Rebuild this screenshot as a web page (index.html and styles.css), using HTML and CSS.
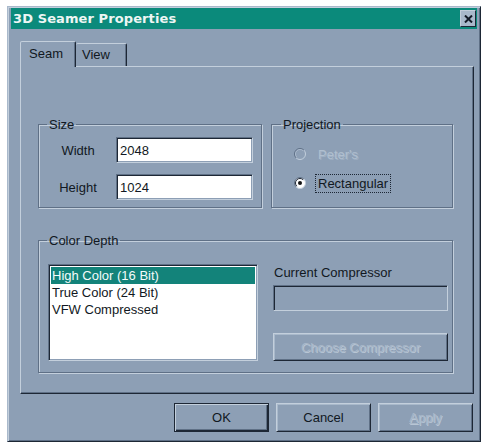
FILE: index.html
```html
<!DOCTYPE html>
<html lang="en">
<head>
<meta charset="utf-8">
<title>3D Seamer Properties</title>
<link rel="stylesheet" href="styles.css">
</head>
<body>
<div class="window">
  <div class="titlebar">
    <span class="title">3D Seamer Properties</span>
    <button class="close" type="button" aria-label="Close">
      <svg width="9" height="8" viewBox="0 0 9 8"><path d="M1 0.5 L8 7.5 M8 0.5 L1 7.5" stroke="#141c28" stroke-width="2"/></svg>
    </button>
  </div>
  <div class="content">
    <div class="tabs">
      <div class="tab active">Seam</div>
      <div class="tab">View</div>
    </div>
    <div class="panel">
      <div class="top-row">
        <fieldset class="group size">
          <legend>Size</legend>
          <div class="size-grid">
            <label class="field-label">Width</label>
            <div class="input sunken">2048</div>
            <label class="field-label">Height</label>
            <div class="input sunken">1024</div>
          </div>
        </fieldset>
        <fieldset class="group projection">
          <legend>Projection</legend>
          <div class="radio disabled">
            <svg width="12" height="12" viewBox="0 0 12 12">
              <circle cx="6" cy="6" r="5.5" fill="#8d9fb5"/>
              <path d="M2.1 9.9 A5.5 5.5 0 0 1 9.9 2.1" fill="none" stroke="#5f7086" stroke-width="1"/>
              <path d="M9.9 2.1 A5.5 5.5 0 0 1 2.1 9.9" fill="none" stroke="#c3cfdc" stroke-width="1"/>
              <path d="M2.8 9.2 A4.5 4.5 0 0 1 9.2 2.8" fill="none" stroke="#aab9cb" stroke-width="1"/>
            </svg>
            <span class="radio-text">Peter's</span>
          </div>
          <div class="radio">
            <svg width="12" height="12" viewBox="0 0 12 12">
              <circle cx="6" cy="6" r="5.5" fill="#ffffff"/>
              <path d="M2.1 9.9 A5.5 5.5 0 0 1 9.9 2.1" fill="none" stroke="#5f7086" stroke-width="1"/>
              <path d="M9.9 2.1 A5.5 5.5 0 0 1 2.1 9.9" fill="none" stroke="#c3cfdc" stroke-width="1"/>
              <path d="M2.8 9.2 A4.5 4.5 0 0 1 9.2 2.8" fill="none" stroke="#1d2735" stroke-width="1"/>
              <circle cx="6" cy="6" r="2" fill="#111"/>
            </svg>
            <span class="radio-text focus">Rectangular</span>
          </div>
        </fieldset>
      </div>
      <fieldset class="group depth">
        <legend>Color Depth</legend>
        <div class="depth-row">
          <ul class="listbox sunken">
            <li class="selected">High Color (16 Bit)</li>
            <li>True Color (24 Bit)</li>
            <li>VFW Compressed</li>
          </ul>
          <div class="compressor">
            <div class="comp-label">Current Compressor</div>
            <div class="comp-field sunken"></div>
            <button class="btn wide disabled" type="button">Choose Compressor</button>
          </div>
        </div>
      </fieldset>
    </div>
    <div class="buttons">
      <button class="btn default" type="button">OK</button>
      <button class="btn" type="button">Cancel</button>
      <button class="btn disabled" type="button"><u>A</u>pply</button>
    </div>
  </div>
</div>
</body>
</html>
```
FILE: styles.css
```css
:root {
  --face: #8d9fb5;
  --light: #c3cfdc;
  --hi2: #a9b9cb;
  --shadow: #5f7086;
  --dark: #1d2735;
  --teal: #0b8a7b;
}

* { box-sizing: border-box; }

body {
  margin: 0;
  background: #ffffff;
  font-family: "Liberation Sans", Arial, sans-serif;
  font-size: 13px;
  color: #111822;
}

.window {
  margin: 6px 0 0 7px;
  width: 474px;
  height: 436px;
  background: var(--face);
  border: 1px solid;
  border-color: var(--hi2) var(--dark) var(--dark) var(--hi2);
  box-shadow: inset 1px 1px 0 var(--light), inset -1px -1px 0 var(--shadow);
  padding: 1px 3px 0 3px;
  display: flex;
  flex-direction: column;
}

.titlebar {
  height: 21px;
  background: var(--teal);
  display: flex;
  align-items: center;
  justify-content: space-between;
  padding: 0 1px 0 2px;
}

.title {
  font-family: "DejaVu Sans", Verdana, sans-serif;
  font-weight: bold;
  font-size: 13px;
  color: #eef6f4;
  letter-spacing: 0.1px;
}

.close {
  width: 16px;
  height: 17px;
  padding: 0;
  background: #a9b9cb;
  border: 1px solid;
  border-color: var(--light) var(--dark) var(--dark) var(--light);
  display: flex;
  align-items: center;
  justify-content: center;
}

.content {
  padding: 12px 3px 0 9px;
  display: flex;
  flex-direction: column;
}

.tabs {
  display: flex;
  align-items: flex-end;
  height: 25px;
}

.tab {
  height: 23px;
  padding: 3px 6px 0 6px;
  border: 1px solid;
  border-bottom: none;
  border-color: var(--light) var(--dark) transparent var(--light);
  border-radius: 2px 2px 0 0;
  box-shadow: inset -1px 0 0 var(--shadow);
  background: var(--face);
}

.tab.active {
  height: 26px;
  width: 56px;
  margin-bottom: -1px;
  padding: 4px 0 0 8px;
  position: relative;
  z-index: 1;
}

.tab + .tab {
  width: 51px;
  border-left: none;
  padding-left: 6px;
}

.panel {
  height: 328px;
  border: 1px solid;
  border-color: var(--light) var(--dark) var(--dark) var(--light);
  box-shadow: inset -1px -1px 0 var(--shadow);
  padding: 50px 0 0 17px;
  display: flex;
  flex-direction: column;
}

.top-row {
  display: flex;
  gap: 9px;
}

/* etched group frame; legends sit 8px in from the frame edge */
.group {
  margin: 0;
  padding-left: 0;
  padding-right: 0;
  border: 1px solid var(--shadow);
  box-shadow: inset 1px 1px 0 var(--light), 1px 1px 0 var(--light);
  min-width: 0;
}

.group legend {
  padding: 0 2px;
  margin-left: 8px;
  line-height: 15px;
  height: 15px;
}

.size {
  width: 224px;
  height: 91px;
  padding-top: 5px;
  padding-left: 1px;
}

.size legend {
  margin-left: 7px;
}

.size-grid {
  display: grid;
  grid-template-columns: 76px 137px;
  row-gap: 11px;
  align-items: center;
}

.field-label {
  justify-self: center;
}

.input {
  height: 26px;
  background: #ffffff;
  padding: 5px 0 0 3px;
  line-height: 15px;
}

.sunken {
  border: 1px solid;
  border-color: var(--shadow) var(--light) var(--light) var(--shadow);
  box-shadow: inset 1px 1px 0 var(--dark), inset -1px -1px 0 var(--face);
}

.projection {
  width: 182px;
  height: 91px;
  padding-top: 12px;
  display: flex;
  flex-direction: column;
  gap: 9px;
}

.projection legend {
  margin-left: 9px;
}

.radio {
  display: flex;
  align-items: center;
  height: 20px;
  padding-left: 22px;
}

.radio svg {
  flex: none;
  margin-right: 9px;
}

.radio-text {
  padding: 1px 2px;
  border: 1px dotted transparent;
}

.radio-text.focus {
  border-color: #1d2735;
}

.radio.disabled .radio-text {
  color: #b0bfcf;
  text-shadow: 1px 1px 0 #9fb0c4;
}

.depth {
  margin-top: 25px;
  width: 415px;
  height: 140px;
  padding-top: 16px;
}

.depth legend {
  margin-left: 8px;
}

.depth-row {
  display: flex;
  gap: 15px;
  padding-left: 9px;
}

.listbox {
  width: 210px;
  height: 97px;
  margin: 0;
  padding: 2px;
  list-style: none;
  background: #ffffff;
  line-height: 17px;
}

.listbox li {
  padding-left: 1px;
  height: 17px;
}

.listbox li.selected {
  background: #13837a;
  color: #f4fbfa;
}

.compressor {
  width: 175px;
  display: flex;
  flex-direction: column;
  padding-top: 1px;
}

.comp-label {
  line-height: 15px;
  margin-left: 1px;
}

.comp-field {
  margin-top: 5px;
  height: 26px;
  background: var(--face);
}

.btn {
  font-family: "Liberation Sans", Arial, sans-serif;
  font-size: 13px;
  color: #111822;
  width: 95px;
  height: 29px;
  padding: 0;
  background: var(--face);
  border: 1px solid;
  border-color: var(--light) var(--dark) var(--dark) var(--light);
  box-shadow: inset 1px 1px 0 var(--hi2), inset -1px -1px 0 var(--shadow);
}

.btn.wide {
  width: 175px;
  height: 28px;
  margin-top: 22px;
}

.btn.default {
  border: 1px solid var(--dark);
  box-shadow: inset 1px 1px 0 var(--light), inset -1px -1px 0 var(--dark), inset -2px -2px 0 var(--shadow);
}

.btn.disabled {
  color: #a9b8c9;
  text-shadow: 1px 1px 0 #b8c6d5;
}

.buttons {
  display: flex;
  justify-content: flex-end;
  gap: 7px;
  margin-top: 9px;
  padding-right: 1px;
}
```
